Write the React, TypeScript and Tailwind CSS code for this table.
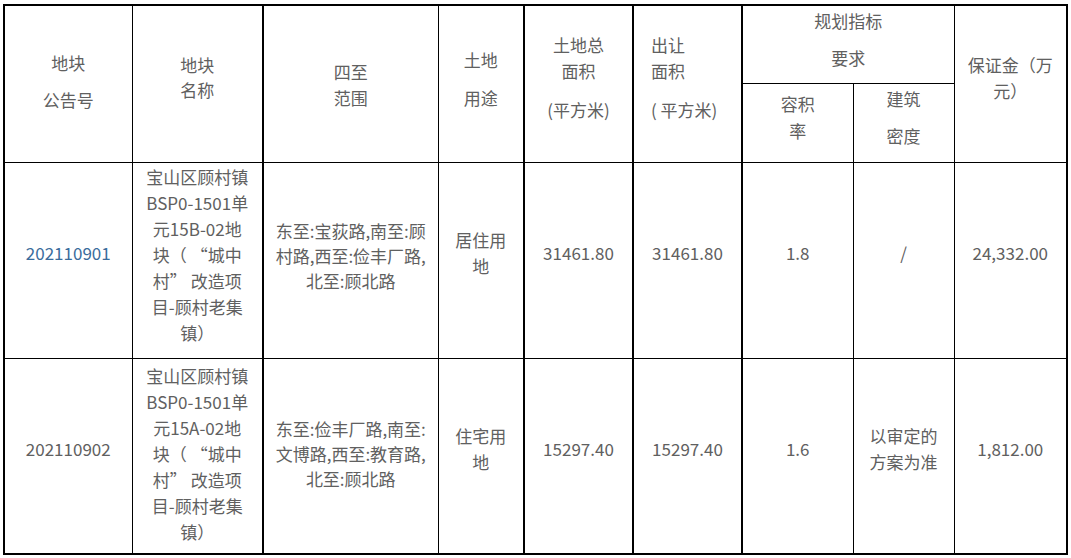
const cell = 'border border-black text-center'

function Lines({ lines, className = '' }: { lines: string[]; className?: string }) {
  return (
    <div className={className}>
      {lines.map((l, i) => (
        <div key={i}>{l}</div>
      ))}
    </div>
  )
}

const rows = [
  {
    no: '202110901',
    link: true,
    name: ['宝山区顾村镇', 'BSP0-1501单', '元15B-02地', '块（ “城中', '村” 改造项', '目-顾村老集', '镇）'],
    range: ['东至:宝荻路,南至:顾', '村路,西至:俭丰厂路,', '北至:顾北路'],
    use: ['居住用', '地'],
    total: '31461.80',
    sell: '31461.80',
    ratio: '1.8',
    density: ['/'],
    deposit: '24,332.00',
  },
  {
    no: '202110902',
    link: false,
    name: ['宝山区顾村镇', 'BSP0-1501单', '元15A-02地', '块（ “城中', '村” 改造项', '目-顾村老集', '镇）'],
    range: ['东至:俭丰厂路,南至:', '文博路,西至:教育路,', '北至:顾北路'],
    use: ['住宅用', '地'],
    total: '15297.40',
    sell: '15297.40',
    ratio: '1.6',
    density: ['以审定的', '方案为准'],
    deposit: '1,812.00',
  },
]

export default function App() {
  return (
    <div className="min-h-[558px] w-[1071px] bg-white pl-[3px] pt-[4px] font-['Noto_Sans_CJK_SC',sans-serif] text-[17px] leading-[26px] text-[#606060]">
      <table className="w-[1063px] table-fixed border-collapse border-2 border-black">
        <colgroup>
          <col className="w-[128px]" />
          <col className="w-[131px]" />
          <col className="w-[175px]" />
          <col className="w-[86px]" />
          <col className="w-[109px]" />
          <col className="w-[109px]" />
          <col className="w-[111px]" />
          <col className="w-[101px]" />
          <col className="w-[113px]" />
        </colgroup>
        <thead>
          <tr className="h-[78px]">
            <th rowSpan={2} className={`${cell} align-top pt-[44px] font-normal`}>
              <div>地块</div>
              <div className="mt-[11px]">公告号</div>
            </th>
            <th rowSpan={2} className={`${cell} align-top pt-[46px] font-normal leading-[25px]`}>
              <Lines lines={['地块', '名称']} />
            </th>
            <th rowSpan={2} className={`${cell} border-l-2 align-top pt-[53px] font-normal`}>
              <Lines lines={['四至', '范围']} />
            </th>
            <th rowSpan={2} className={`${cell} align-top pt-[41px] font-normal`}>
              <div>土地</div>
              <div className="mt-[12px]">用途</div>
            </th>
            <th rowSpan={2} className={`${cell} border-l-2 align-top pt-[26px] font-normal`}>
              <div>土地总</div>
              <div>面积</div>
              <div className="mt-[13px]">(平方米)</div>
            </th>
            <th rowSpan={2} className={`${cell} border-l-2 align-top pl-[17px] pt-[26px] text-left font-normal`}>
              <div>出让</div>
              <div>面积</div>
              <div className="mt-[13px]">( 平方米)</div>
            </th>
            <th colSpan={2} className={`${cell} border-l-2 align-top pt-[2px] font-normal`}>
              <div>规划指标</div>
              <div className="mt-[11px]">要求</div>
            </th>
            <th rowSpan={2} className={`${cell} align-top px-[10px] pt-[46px] font-normal`}>
              <div>保证金（万</div>
              <div>元）</div>
            </th>
          </tr>
          <tr className="h-[79px]">
            <th className={`${cell} border-l-2 align-top pt-[6px] font-normal leading-[27px]`}>
              <Lines lines={['容积', '率']} />
            </th>
            <th className={`${cell} align-top pt-[2px] font-normal`}>
              <div>建筑</div>
              <div className="mt-[11px]">密度</div>
            </th>
          </tr>
        </thead>
        <tbody>
          {rows.map((r, i) => {
            const text = i === 0 ? 'pb-[14px]' : 'pb-[14px]'
            const block = i === 0 ? 'pb-[10px]' : 'pb-[4px]'
            return (
              <tr key={r.no} className="h-[196px]">
                <td className={`${cell} ${text} align-middle`}>
                  <span className={r.link ? 'text-[#3a6c9c]' : ''}>{r.no}</span>
                </td>
                <td className={`${cell} ${block} align-middle`}>
                  <Lines lines={r.name} />
                </td>
                <td className={`${cell} ${block} border-l-2 align-middle leading-[25px]`}>
                  <Lines lines={r.range} />
                </td>
                <td className={`${cell} ${text} align-middle`}>
                  <Lines lines={r.use} />
                </td>
                <td className={`${cell} ${text} border-l-2 align-middle`}>{r.total}</td>
                <td className={`${cell} ${text} border-l-2 align-middle`}>{r.sell}</td>
                <td className={`${cell} ${text} border-l-2 align-middle`}>{r.ratio}</td>
                <td className={`${cell} ${text} align-middle`}>
                  <Lines lines={r.density} />
                </td>
                <td className={`${cell} ${text} align-middle`}>{r.deposit}</td>
              </tr>
            )
          })}
        </tbody>
      </table>
    </div>
  )
}
